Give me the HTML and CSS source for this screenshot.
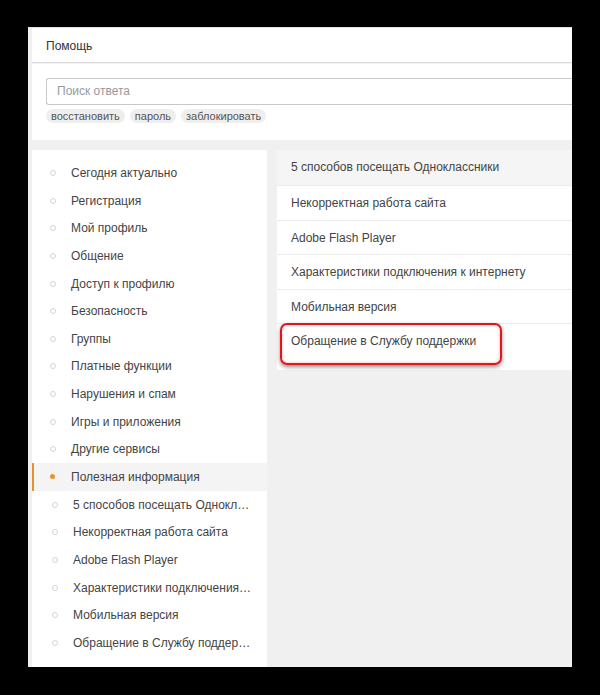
FILE: index.html
```html
<!DOCTYPE html>
<html lang="ru">
<head>
  <meta charset="UTF-8">
  <title>Помощь</title>
  <meta name="viewport" content="width=device-width, initial-scale=1.0">
  <link rel="stylesheet" href="styles.css">
</head>
<body>

  <div class="panel">
    <div class="header">Помощь</div>

    <div class="search">
      <div class="search-input">Поиск ответа</div>
      <div class="tags">
        <span class="tag">восстановить</span>
        <span class="tag">пароль</span>
        <span class="tag">заблокировать</span>
      </div>
    </div>

    <div class="columns">
      <ul class="menu">
        <li>Сегодня актуально</li>
        <li>Регистрация</li>
        <li>Мой профиль</li>
        <li>Общение</li>
        <li>Доступ к профилю</li>
        <li>Безопасность</li>
        <li>Группы</li>
        <li>Платные функции</li>
        <li>Нарушения и спам</li>
        <li>Игры и приложения</li>
        <li>Другие сервисы</li>
        <li class="active">Полезная информация</li>
        <li class="sub">5 способов посещать Одноклассники</li>
        <li class="sub">Некорректная работа сайта</li>
        <li class="sub">Adobe Flash Player</li>
        <li class="sub">Характеристики подключения к интернету</li>
        <li class="sub">Мобильная версия</li>
        <li class="sub">Обращение в Службу поддержки</li>
      </ul>

      <div class="content">
        <ul class="articles">
          <li class="current">5 способов посещать Одноклассники</li>
          <li>Некорректная работа сайта</li>
          <li>Adobe Flash Player</li>
          <li>Характеристики подключения к интернету</li>
          <li>Мобильная версия</li>
          <li class="marked">Обращение в Службу поддержки</li>
        </ul>
      </div>
    </div>
  </div>

</body>
</html>
```

FILE: styles.css
```css
body {
  margin: 0;
  background: #000;
  font-family: 'Liberation Sans', Arial, sans-serif;
  font-size: 12px;
  color: #444;
}

.panel {
  margin: 27px 0 0 28px;
  width: 544px;
  height: 640px;
  background: #f0f0f0;
  border-top: 1px solid #e2e2e2;
  box-sizing: border-box;
  padding-left: 4px;
  display: flex;
  flex-direction: column;
  overflow: hidden;
}

.header {
  background: #fff;
  height: 34px;
  line-height: 36px;
  padding-left: 14px;
  color: #333;
  border-bottom: 1px solid #ddd;
}

.search {
  background: #fff;
  height: 77px;
  padding: 14px 0 0 14px;
  box-sizing: border-box;
  border-top: 1px solid #f2f2f2;
}

.search-input {
  height: 27px;
  line-height: 24px;
  border: 1px solid #c8c8c8;
  border-right: none;
  border-radius: 3px 0 0 3px;
  box-sizing: border-box;
  padding-left: 10px;
  color: #999;
}

.tags {
  display: flex;
  gap: 5px;
  margin-top: 4px;
}

.tag {
  background: #eee;
  border-radius: 8px;
  padding: 0 5px;
  height: 14px;
  line-height: 14px;
  font-size: 11px;
  color: #555;
}

.columns {
  display: flex;
  gap: 10px;
  margin-top: 10px;
  flex: 1;
}

.menu {
  list-style: none;
  margin: 0;
  padding: 9px 0 0;
  width: 235px;
  background: #fff;
}

.menu li {
  position: relative;
  height: 27.65px;
  line-height: 28.5px;
  padding-left: 39px;
  padding-right: 14px;
  white-space: nowrap;
  overflow: hidden;
  text-overflow: ellipsis;
}

.menu li::before {
  content: "";
  position: absolute;
  left: 18px;
  top: 11px;
  width: 4px;
  height: 4px;
  border: 1px solid #d4d4d4;
  border-radius: 50%;
}

.menu li.sub {
  padding-left: 41px;
}

.menu li.sub::before {
  left: 20px;
}

.menu li.active {
  background: #f4f4f4;
  box-shadow: inset 2px 0 0 #eb8f2e;
}

.menu li.active::before {
  background: #eb8f2e;
  width: 5px;
  height: 5px;
  border: none;
  top: 11px;
  left: 18px;
}

.content {
  flex: 1;
}

.articles {
  list-style: none;
  margin: 0;
  padding: 0;
  background: #fff;
  position: relative;
}

.articles li {
  height: 34.5px;
  line-height: 35px;
  padding-left: 14px;
  border-top: 1px solid #ececec;
  box-sizing: border-box;
  position: relative;
}

.articles li.current {
  background: #f5f5f5;
  border-top: none;
  height: 35px;
}

.articles li.marked {
  height: 47px;
}

.articles li.marked::after {
  content: "";
  position: absolute;
  left: 3px;
  top: -1px;
  width: 222px;
  height: 42px;
  border: 2px solid #e3141c;
  border-radius: 7px;
  box-sizing: border-box;
  box-shadow: 0 2px 4px rgba(0, 0, 0, 0.45), inset 0 0 3px rgba(227, 20, 28, 0.35);
}
```
